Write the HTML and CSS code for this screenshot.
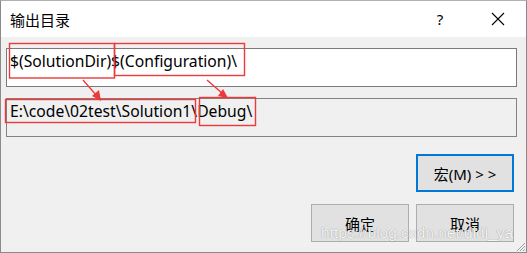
FILE: index.html
```html
<!DOCTYPE html>
<html lang="zh-CN">
<head>
<meta charset="utf-8">
<title>输出目录</title>
<link rel="stylesheet" href="styles.css">
</head>
<body>
<div class="window">
  <div class="titlebar">
    <span class="title">输出目录</span>
    <span class="help">?</span>
    <span class="close">
      <svg width="14" height="14" viewBox="0 0 14 14"><path d="M1 1 L13 13 M13 1 L1 13" stroke="#000" stroke-width="1.1" fill="none"/></svg>
    </span>
  </div>
  <div class="content">
    <div class="field field-edit">$(SolutionDir)$(Configuration)\</div>
    <div class="field field-readonly">E:\code\02test\Solution1\Debug\</div>
    <div class="buttons buttons-macro">
      <button class="btn btn-default">宏(M) <span class="chev">&gt;&gt;</span></button>
    </div>
    <div class="buttons buttons-ok">
      <button class="btn">确定</button>
      <button class="btn">取消</button>
    </div>
  </div>
  <div class="watermark">https://blog.csdn.net/didi_ya</div>
  <svg class="grip" width="12" height="12" viewBox="0 0 12 12">
    <path d="M11 3 L3 11 M11 6 L6 11 M11 9 L9 11" stroke="#a0a0a0" stroke-width="1" fill="none"/>
  </svg>
  <svg class="annot" width="527" height="253" viewBox="0 0 527 253">
    <g fill="none" stroke="#ec3a3a" stroke-width="1.4">
      <rect x="9.5" y="43.5" width="105" height="34.5"/>
      <rect x="114.5" y="43.5" width="130" height="32"/>
      <rect x="5.5" y="99.5" width="190" height="23"/>
      <rect x="199.5" y="97.5" width="56" height="28"/>
      <path d="M83 80 L97 96"/>
      <path d="M207 80 L223 94"/>
    </g>
    <g fill="#ec3a3a">
      <path d="M101 101 L92 96 L99 90 Z"/>
      <path d="M228 98 L218 96 L223 89 Z"/>
    </g>
  </svg>
</div>
</body>
</html>
```

FILE: styles.css
```css
html, body {
  margin: 0;
  padding: 0;
  background: #f0f0f0;
}

.window {
  position: relative;
  width: 527px;
  height: 253px;
  box-sizing: border-box;
  border: 1px solid #8a8a8a;
  border-top-color: #b0b0b0;
  background: #f0f0f0;
  font-family: "Noto Sans", "Noto Sans CJK SC", sans-serif;
  display: flex;
  flex-direction: column;
  overflow: hidden;
}

.titlebar {
  height: 36px;
  background: #ffffff;
  display: flex;
  align-items: center;
  flex: none;
}

.title {
  padding-left: 9px;
  font-family: "Noto Sans CJK SC", sans-serif;
  font-size: 15px;
  color: #000;
  flex: 1;
}

.help {
  font-size: 15px;
  color: #000;
  width: 20px;
  text-align: center;
  margin-right: 41px;
}

.close {
  display: flex;
  width: 14px;
  height: 14px;
  margin-right: 21px;
}

.content {
  flex: 1;
  display: flex;
  flex-direction: column;
  padding: 11px 9px 0 5px;
}

.field {
  height: 39px;
  box-sizing: border-box;
  border: 1px solid #7a7a7a;
  padding: 2px 0 0 3px;
  font-size: 15.7px;
  line-height: 21px;
  color: #000;
  white-space: nowrap;
}

.field-edit {
  background: #ffffff;
}

.field-readonly {
  background: #f0f0f0;
  border-color: #838383;
  margin-top: 11px;
}

.buttons {
  display: flex;
  justify-content: flex-end;
  gap: 7px;
  margin-right: 3px;
}

.buttons-macro {
  margin-top: 17px;
}

.buttons-ok {
  margin-top: 12px;
}

.btn {
  width: 98px;
  height: 38px;
  box-sizing: border-box;
  border: 1px solid #adadad;
  background: #e1e1e1;
  font-family: "Noto Sans", "Noto Sans CJK SC", sans-serif;
  font-size: 15px;
  color: #000;
  padding: 0;
  margin: 0;
}

.btn-default {
  border: 2px solid #0078d7;
}

.chev {
  letter-spacing: 4px;
  margin-right: -4px;
}

.watermark {
  position: absolute;
  left: 320px;
  top: 223px;
  font-family: "Liberation Sans", Arial, sans-serif;
  font-size: 15.5px;
  color: rgba(255, 255, 255, 0.92);
  text-shadow: 0 0 1px rgba(0, 0, 0, 0.45);
  white-space: nowrap;
  pointer-events: none;
}

.grip {
  position: absolute;
  right: 0;
  bottom: 0;
}

.annot {
  position: absolute;
  left: -1px;
  top: -1px;
  pointer-events: none;
}
```
